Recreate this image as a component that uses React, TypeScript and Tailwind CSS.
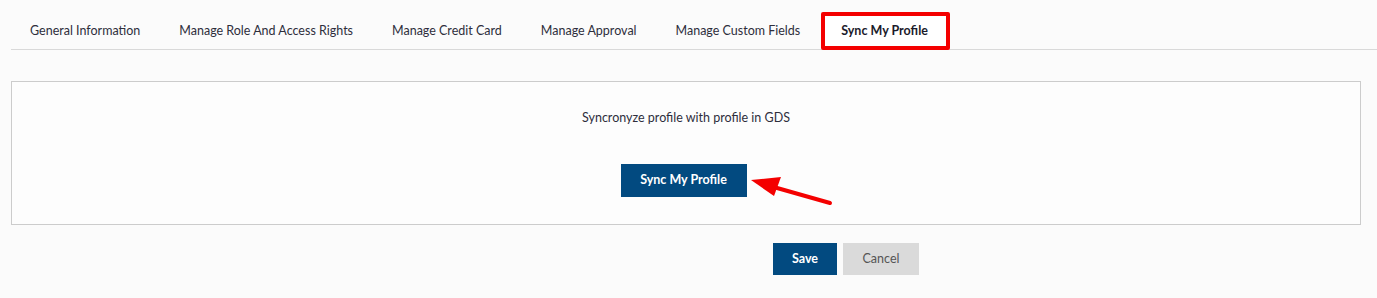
import React from "react";

const tabs = [
  "General Information",
  "Manage Role And Access Rights",
  "Manage Credit Card",
  "Manage Approval",
  "Manage Custom Fields",
];

export default function App() {
  return (
    <div
      className="relative w-[1377px] h-[298px] bg-[#fbfbfb] text-[#2b2b3a]"
      style={{ fontFamily: "Lato, 'Open Sans', sans-serif" }}
    >
      <div className="pl-[11px] pt-[12px]">
        <div className="flex items-stretch border-b border-[#d9d9d9] h-[38px]">
          {tabs.map((t) => (
            <div key={t} className="pl-[19px] pr-[20px] pt-px flex items-center text-[12.5px] text-[#2e2e3c]">
              {t}
            </div>
          ))}
          <div className="ml-px pl-[16px] pr-[18px] pt-px flex items-center text-[12.5px] font-bold text-[#1b1b2b] bg-white border-4 border-[#f40000] rounded-[2px] -mb-px">
            Sync My Profile
          </div>
        </div>
      </div>

      <div className="pl-[11px] pr-[16px] pt-[31px]">
        <div className="border border-[#cccccc] bg-[#fdfdfd] h-[144px] flex flex-col items-center">
          <div className="mt-[27px] text-[12.5px] text-[#2e2e3c] leading-[18px]">
            Syncronyze profile with profile in GDS
          </div>
          <button className="mt-[37px] mr-[5px] w-[126px] h-[33px] bg-[#024a80] text-white text-[12.5px] font-bold">
            Sync My Profile
          </button>
        </div>
      </div>

      <div className="flex gap-[6px] pl-[773px] pt-[18px]">
        <button className="w-[64px] h-[32px] bg-[#024a80] text-white text-[12.5px] font-bold">Save</button>
        <button className="w-[76px] h-[32px] bg-[#dadada] text-[#555] text-[12.5px]">Cancel</button>
      </div>

      <svg className="absolute left-0 top-0 pointer-events-none" width="1377" height="298">
        <line x1="830" y1="203" x2="770" y2="186" stroke="#f40000" strokeWidth="4" strokeLinecap="round" />
        <polygon points="751,180 781,177 774,196" fill="#f40000" />
      </svg>
    </div>
  );
}
